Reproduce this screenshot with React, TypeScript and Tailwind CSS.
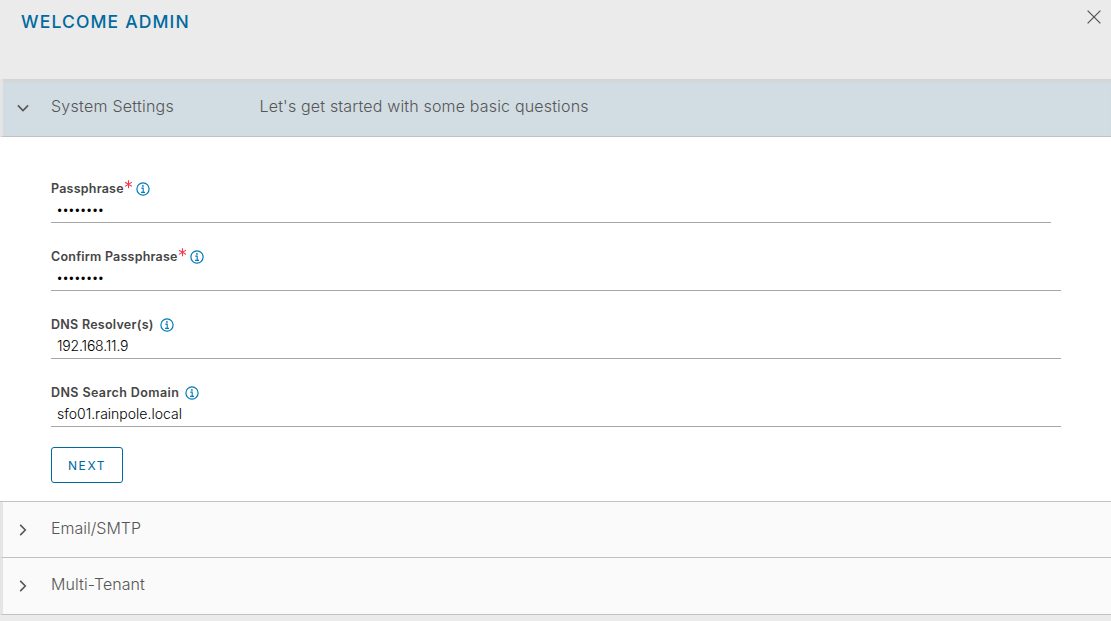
import React from "react";

function InfoIcon() {
  return (
    <svg width="14" height="14" viewBox="0 0 14 14" fill="none" stroke="#0079b8" className="block shrink-0">
      <circle cx="7" cy="7" r="6.1" strokeWidth="1.2" />
      <circle cx="6.9" cy="3.9" r="0.9" fill="#0079b8" stroke="none" />
      <path d="M5.3 6.1H7.2V10.2M5.1 10.4H9" strokeWidth="1.1" />
    </svg>
  );
}

function RequiredMark() {
  return (
    <svg width="8" height="9" viewBox="0 0 8 9" fill="none" stroke="#f0364f" strokeWidth="1.1" className="mb-2.5 block shrink-0">
      <path d="M4.5 0.3V8.3M1 2.2L8 6.4M8 2.2L1 6.4" />
    </svg>
  );
}

function Chevron({ open = false }: { open?: boolean }) {
  return (
    <svg width="14" height="14" viewBox="0 0 14 14" fill="none" stroke="#565656" strokeWidth="1.6" className="block shrink-0">
      <path d={open ? "M1.9 4.4L7 9.5L12.1 4.4" : "M4.2 1.9L9.3 7L4.2 12.1"} />
    </svg>
  );
}

type FieldProps = {
  label: string;
  labelClass: string;
  required?: boolean;
  widthClass?: string;
  children: React.ReactNode;
};

function Field({ label, labelClass, required, widthClass = "w-[1010px]", children }: FieldProps) {
  return (
    <div className={`flex h-[68px] flex-col ${widthClass}`}>
      <div className="flex h-[22px] items-center">
        <span className={`text-[12.5px] font-semibold text-[#454545] ${labelClass}`}>{label}</span>
        {required && <RequiredMark />}
        <span className={required ? "ml-1" : "ml-1.5"}>
          <InfoIcon />
        </span>
      </div>
      <div className="flex h-[23px] items-center border-b border-[#a6a6a6] pb-[3px] pl-1.5">{children}</div>
    </div>
  );
}

function MaskedValue() {
  return (
    <span className="pt-[2px] pl-[0.5px] font-['Liberation_Sans',sans-serif] text-[12px] leading-4 tracking-[1.7px] text-black">••••••••</span>
  );
}

function StepRow({ title, titleClass, className }: { title: string; titleClass: string; className: string }) {
  return (
    <button className={`flex w-full border-b border-l-[3px] border-b-[#c1c1c1] border-l-[#e5e5e5] bg-[#fafafa] pl-[13px] text-left ${className}`}>
      <span className="pt-[21px]">
        <Chevron />
      </span>
      <span className={`ml-[21px] pt-[14px] text-base leading-6 font-light text-[#565656] ${titleClass}`}>{title}</span>
    </button>
  );
}

export default function App() {
  return (
    <main className="flex h-[621px] w-[1111px] flex-col overflow-hidden bg-[#ebebeb] font-['Inter','Liberation_Sans',sans-serif]">
      <header className="flex h-[79px] shrink-0 items-start justify-between pt-[9px] pr-[10px] pl-[21px]">
        <h1 className="text-[17.5px] leading-[26px] font-medium tracking-[1.15px] whitespace-nowrap text-[#006a9e]">WELCOME ADMIN</h1>
        <button aria-label="Close" className="mt-px">
          <svg width="14" height="14" viewBox="0 0 14 14" fill="none" stroke="#565656" strokeWidth="1.3">
            <path d="M0.6 0.6L13.4 13.4M13.4 0.6L0.6 13.4" />
          </svg>
        </button>
      </header>

      <section className="flex h-[58px] shrink-0 border-b border-l-[3px] border-b-[#c1c1c1] border-l-[#e5e5e5] bg-[#d1dde3] pl-[13px] text-base leading-6 font-light text-[#565656] shadow-[inset_0_4px_2px_-1px_#d5d5d5]">
        <span className="pt-[22px]">
          <Chevron open />
        </span>
        <span className="ml-[21px] w-[208.5px] pt-[15px] tracking-[0.25px] whitespace-nowrap">System Settings</span>
        <span className="pt-[15px] tracking-[0.17px] whitespace-nowrap">Let's get started with some basic questions</span>
      </section>

      <section className="flex h-[365px] shrink-0 flex-col items-start border-b border-[#c1c1c1] bg-white pt-[41px] pl-[51px]">
        <Field label="Passphrase" labelClass="tracking-[0.22px]" required widthClass="w-[1000px]">
          <MaskedValue />
        </Field>
        <Field label="Confirm Passphrase" labelClass="tracking-[0.22px]" required>
          <MaskedValue />
        </Field>
        <Field label="DNS Resolver(s)" labelClass="tracking-[0.27px]">
          <span className="text-sm font-light tracking-[-0.18px] text-black">192.168.11.9</span>
        </Field>
        <Field label="DNS Search Domain" labelClass="tracking-[0.4px]">
          <span className="text-sm font-light text-black">sfo01.rainpole.local</span>
        </Field>
        <button className="-mt-[3px] flex h-9 w-[72px] shrink-0 items-center justify-center rounded-[3px] border border-[#006a9e] pt-px text-xs tracking-[1.6px] text-[#006a9e]">
          NEXT
        </button>
      </section>

      <StepRow title="Email/SMTP" titleClass="" className="h-14 shrink-0" />
      <StepRow title="Multi-Tenant" titleClass="tracking-[0.08px]" className="h-[57px] shrink-0" />
    </main>
  );
}
